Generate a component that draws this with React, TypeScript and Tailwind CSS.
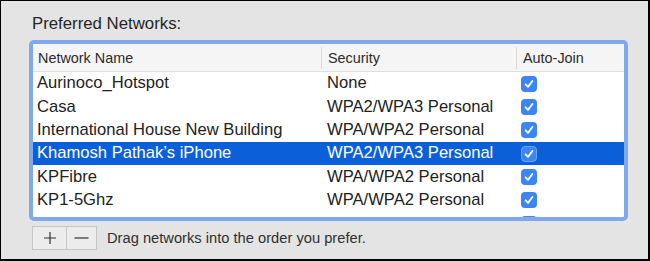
import React from "react";

const rows = [
  { name: "Aurinoco_Hotspot", sec: "None" },
  { name: "Casa", sec: "WPA2/WPA3 Personal" },
  { name: "International House New Building", sec: "WPA/WPA2 Personal" },
  { name: "Khamosh Pathak\u2019s iPhone", sec: "WPA2/WPA3 Personal", selected: true },
  { name: "KPFibre", sec: "WPA/WPA2 Personal" },
  { name: "KP1-5Ghz", sec: "WPA/WPA2 Personal" },
  { name: "", sec: "" },
];

function Check({ selected }: { selected?: boolean }) {
  return (
    <div
      className={
        "w-[16px] h-[16px] box-border rounded-[4px] flex items-center justify-center " +
        (selected ? "bg-[#3c86f3] border border-[#6ba3f5]" : "bg-[#3b86f4]")
      }
    >
      <svg width="12" height="12" viewBox="0 0 12 12" fill="none">
        <path d="M2.6 6.3 L5 8.9 L9.4 3" stroke="white" strokeWidth="1.8" strokeLinecap="round" strokeLinejoin="round" />
      </svg>
    </div>
  );
}

export default function App() {
  return (
    <div className="w-[650px] h-[261px] box-border bg-[#e4e4e4] border-black border-t border-l border-r-2 border-b-2 font-['Liberation_Sans',Arial,sans-serif] overflow-hidden">
      <div className="pl-[31px] pt-[13px] h-[20px] box-content leading-[20px] text-[16.8px] text-[#262626]">
        Preferred Networks:
      </div>
      <div className="ml-[28px] mt-[6px] w-[599px] h-[181px] box-border border-4 border-[#7fa8ef] rounded-[5px] bg-white overflow-hidden">
        <div className="flex h-[28px] bg-[#f5f5f5] border-b border-[#dedede] text-[14.4px] text-[#2b2b2b] items-center">
          <div className="w-[288px] pl-[5px] pt-[2px]">Network Name</div>
          <div className="w-px h-[22px] bg-[#dadada]" />
          <div className="w-[194px] pl-[6px] pt-[2px]">Security</div>
          <div className="w-px h-[22px] bg-[#dadada]" />
          <div className="flex-1 pl-[6px] pt-[2px]">Auto-Join</div>
        </div>
        <div className="text-[16.6px]">
          {rows.map((r, i) => (
            <div
              key={i}
              className={
                "flex items-center h-[23.33px] " +
                (r.selected ? "bg-[#0b5fd9] text-white" : "text-[#222]")
              }
            >
              <div className="w-[288px] pl-[4px] whitespace-nowrap">{r.name}</div>
              <div className="w-[195px] pl-[6px] whitespace-nowrap">{r.sec}</div>
              <div className="flex-1 pl-[5px]">
                <Check selected={r.selected} />
              </div>
            </div>
          ))}
        </div>
      </div>
      <div className="flex items-center mt-[5px] ml-[31px]">
        <div className="flex h-[24px] border border-[#c6c6c6] bg-[#ececec]">
          <div className="w-[34px] flex items-center justify-center border-r border-[#c6c6c6]">
            <svg width="14" height="14" viewBox="0 0 14 14">
              <path d="M7 1 V13 M1 7 H13" stroke="#333" strokeWidth="1.2" />
            </svg>
          </div>
          <div className="w-[29px] flex items-center justify-center">
            <svg width="15" height="14" viewBox="0 0 15 14">
              <path d="M0.5 7 H14.5" stroke="#333" strokeWidth="1.2" />
            </svg>
          </div>
        </div>
        <div className="ml-[10px] text-[14.7px] text-[#303030]">Drag networks into the order you prefer.</div>
      </div>
    </div>
  );
}
